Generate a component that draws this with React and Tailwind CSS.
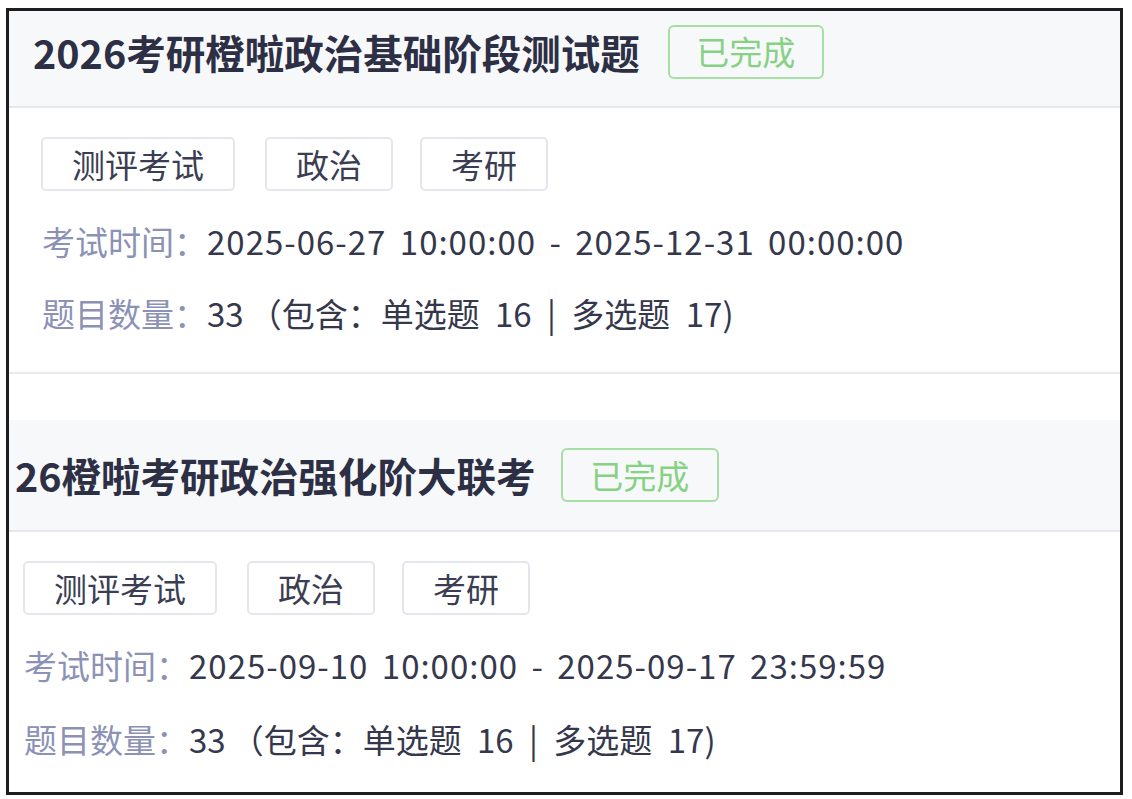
import React from "react";

const FONT = { fontFamily: '"Noto Sans CJK SC", "Noto Sans", sans-serif' };

function Tag({ children, className = "" }) {
  return (
    <div className={`h-[54px] px-[29px] flex items-center border-2 border-[#e4e6eb] rounded-[5px] bg-white text-[33px] leading-none text-[#3b3e52] ${className}`}>
      {children}
    </div>
  );
}

function Badge({ w }) {
  return (
    <div
      className={`h-[54px] flex items-center justify-center border-2 border-[#a6dea3] rounded-[6px] text-[33px] leading-none text-[#86d183] ${w}`}
    >
      已完成
    </div>
  );
}

function TimeRow({ value, h }) {
  return (
    <div className={`flex items-center text-[33px] leading-none ${h}`}>
      <span className="text-[#8c92b6]">考试时间：</span>
      <span className="text-[#35384c] whitespace-pre tracking-[1px] [word-spacing:5px]">{value}</span>
    </div>
  );
}

function CountRow({ h }) {
  return (
    <div className={`flex items-center text-[33px] leading-none ${h}`}>
      <span className="text-[#8c92b6]">题目数量：</span>
      <span className="text-[#35384c]">33</span>
      <span className="ml-[5px] text-[#35384c] whitespace-pre [word-spacing:8px]">（包含：单选题 16 | 多选题 17)</span>
    </div>
  );
}

function Tags() {
  return (
    <div className="flex">
      <Tag className="mr-[30px]">测评考试</Tag>
      <Tag className="mr-[27px]">政治</Tag>
      <Tag>考研</Tag>
    </div>
  );
}

export default function App() {
  return (
    <div className="w-[1132px] h-[799px] bg-white overflow-hidden" style={FONT}>
      <div className="ml-[6px] mt-[8px] w-[1117px] h-[787px] border-[3px] border-[#1d1d1f] overflow-hidden bg-white">
        {/* Card 1 */}
        <div className="border-b-2 border-[#e9e9f3] mb-[46px]">
          <div className="h-[97px] pb-[14px] pl-[24px] flex items-center gap-[28px] bg-[#f7f8fa] border-b-2 border-[#e5e7ed]">
            <h2 className="text-[39.5px] font-bold leading-none text-[#2d2f45]">2026考研橙啦政治基础阶段测试题</h2>
            <Badge w="w-[156px]" />
          </div>
          <div className="pt-[29px] pl-[32px] pb-[23px]">
            <Tags />
            <div className="mt-[14px] pl-[1px]">
              <TimeRow h="h-[72px]" value="2025-06-27 10:00:00 - 2025-12-31 00:00:00" />
              <CountRow h="h-[72px]" />
            </div>
          </div>
        </div>

        {/* Card 2 */}
        <div>
          <div className="h-[112px] pl-[6px] flex items-center gap-[25px] bg-[#f7f8fa] border-b-2 border-[#e5e7ed]">
            <h2 className="text-[39.5px] font-bold leading-none text-[#2d2f45]">26橙啦考研政治强化阶大联考</h2>
            <Badge w="w-[158px]" />
          </div>
          <div className="pt-[29px] pl-[14px]">
            <Tags />
            <div className="mt-[13px] pl-[1px]">
              <TimeRow h="h-[74px]" value="2025-09-10 10:00:00 - 2025-09-17 23:59:59" />
              <CountRow h="h-[74px]" />
            </div>
          </div>
        </div>
      </div>
    </div>
  );
}
